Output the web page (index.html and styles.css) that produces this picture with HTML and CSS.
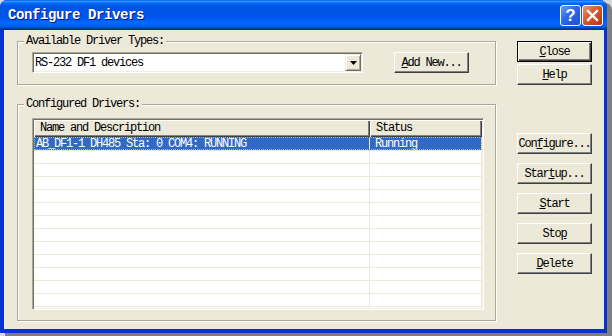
FILE: index.html
```html
<!DOCTYPE html>
<html>
	<head>
		<meta charset="UTF-8">
		<title>Configure Drivers</title>
		<link rel="stylesheet" href="styles.css">
	</head>
	<body>
		<div class="window">
			<div class="titlebar">
				<span class="title">Configure Drivers</span>
				<span class="tbtn help">?</span>
				<span class="tbtn shut">
					<svg width="13" height="13" viewBox="0 0 13 13">
						<path d="M2 2 L11 11 M11 2 L2 11" stroke="#fff" stroke-width="2.4" stroke-linecap="square" />
					</svg>
				</span>
			</div>
			<div class="client">
				<div class="left">
					<div class="group types">
						<div class="caption">Available Driver Types:</div>
						<div class="typerow">
							<div class="combo">
								<span class="combo-text">RS-232 DF1 devices</span>
								<span class="drop">
									<svg width="7" height="4" viewBox="0 0 7 4">
										<path d="M0 0 H7 L3.5 4 Z" fill="#000" />
									</svg>
								</span>
							</div>
							<button class="btn add"><u>A</u>dd New...</button>
						</div>
					</div>
					<div class="group drivers">
						<div class="caption">Configured Drivers:</div>
						<div class="list">
							<div class="head">
								<div class="hcell name">Name and Description</div>
								<div class="hcell status">Status</div>
							</div>
							<div class="row selected">
								<div class="cell name">AB_DF1-1 DH485 Sta: 0 COM4: RUNNING</div>
								<div class="cell status">Running</div>
							</div>
							<div class="row"><div class="cell name"></div><div class="cell status"></div></div>
							<div class="row"><div class="cell name"></div><div class="cell status"></div></div>
							<div class="row"><div class="cell name"></div><div class="cell status"></div></div>
							<div class="row"><div class="cell name"></div><div class="cell status"></div></div>
							<div class="row"><div class="cell name"></div><div class="cell status"></div></div>
							<div class="row"><div class="cell name"></div><div class="cell status"></div></div>
							<div class="row"><div class="cell name"></div><div class="cell status"></div></div>
							<div class="row"><div class="cell name"></div><div class="cell status"></div></div>
							<div class="row"><div class="cell name"></div><div class="cell status"></div></div>
							<div class="row"><div class="cell name"></div><div class="cell status"></div></div>
							<div class="row"><div class="cell name"></div><div class="cell status"></div></div>
							<div class="row"><div class="cell name"></div><div class="cell status"></div></div>
							<div class="row"><div class="cell name"></div><div class="cell status"></div></div>
						</div>
					</div>
				</div>
				<div class="right">
					<button class="btn default"><u>C</u>lose</button>
					<button class="btn help-btn"><u>H</u>elp</button>
					<button class="btn configure">Con<u>f</u>igure...</button>
					<button class="btn">Star<u>t</u>up...</button>
					<button class="btn"><u>S</u>tart</button>
					<button class="btn">Sto<u>p</u></button>
					<button class="btn"><u>D</u>elete</button>
				</div>
			</div>
		</div>
	</body>
</html>
```

FILE: styles.css
```css
* {
	margin: 0;
	padding: 0;
	box-sizing: border-box;
}

body {
	width: 612px;
	height: 336px;
	background: #d8d8d8;
	font-family: "Liberation Mono", "Noto Sans CJK SC", monospace;
	font-size: 12px;
	letter-spacing: -1.2px;
	color: #000;
	overflow: hidden;
}

.window {
	width: 607px;
	height: 333px;
	display: flex;
	flex-direction: column;
	background: #0831d9;
	border-radius: 7px 7px 0 0;
	box-shadow: 5px 3px 0 #7f7f7f;
	overflow: hidden;
}

/* title bar */
.titlebar {
	height: 30px;
	display: flex;
	align-items: flex-start;
	padding: 5px 4px 0 8px;
	background: linear-gradient(to bottom, #0058ee 0%, #3593ff 4%, #288eff 6%, #127dff 8%, #036ffc 10%, #0262ee 14%, #0057e5 20%, #0054e3 24%, #0055eb 56%, #005bf5 66%, #026afe 76%, #0062ef 86%, #0052d6 92%, #0040ab 94%, #003092 100%);
}

.title {
	flex: 1;
	color: #fff;
	font-weight: bold;
	font-size: 14px;
	letter-spacing: -0.4px;
	line-height: 20px;
	text-shadow: 1px 1px #0a1883;
}

.tbtn {
	width: 21px;
	height: 21px;
	border: 1px solid #fff;
	border-radius: 3px;
	display: flex;
	align-items: center;
	justify-content: center;
	color: #fff;
}

.help {
	margin-right: 1px;
	background: linear-gradient(135deg, #6f9cf7 0%, #2d66e6 45%, #1f4fd0 100%);
	font-family: "Liberation Sans", sans-serif;
	font-weight: bold;
	font-size: 17px;
	letter-spacing: 0;
}

.shut {
	background: linear-gradient(135deg, #ec9479 0%, #d9572f 45%, #b7350f 100%);
}

/* client area */
.client {
	flex: 1;
	margin: 0 3px 4px 4px;
	background: #ece9d8;
	display: flex;
	padding: 11px 12px 0 13px;
}

.left {
	width: 479px;
}

.group {
	border: 1px solid #aca899;
	box-shadow: inset 1px 1px #fff, 1px 1px #fff;
	padding: 0 0 0 14px;
}

.caption {
	width: fit-content;
	margin: -7px 0 0 -8px;
	padding: 0 2px;
	line-height: 12px;
	background: #ece9d8;
}

.types {
	padding-bottom: 11px;
}

.typerow {
	display: flex;
	margin-top: 5px;
	gap: 31px;
}

.combo {
	width: 331px;
	height: 21px;
	display: flex;
	align-items: center;
	background: #fff;
	border: 1px solid;
	border-color: #aca899 #fff #fff #aca899;
	box-shadow: inset 1px 1px #716f64, inset -1px -1px #f1efe2;
	padding: 1px;
}

.combo-text {
	flex: 1;
	padding-left: 1px;
}

.drop {
	width: 16px;
	height: 17px;
	display: flex;
	align-items: center;
	justify-content: center;
	background: #ece9d8;
	border: 1px solid;
	border-color: #f1efe2 #716f64 #716f64 #f1efe2;
	box-shadow: inset 1px 1px #fff, inset -1px -1px #aca899;
}

.btn {
	width: 75px;
	height: 21px;
	font: inherit;
	letter-spacing: inherit;
	color: #000;
	background: #ece9d8;
	border: 1px solid;
	border-color: #fff #404040 #404040 #fff;
	box-shadow: inset -1px -1px #808080;
	white-space: nowrap;
}

.btn u {
	text-underline-offset: 1px;
}

.drivers {
	margin-top: 19px;
	padding-bottom: 10px;
}

.list {
	margin-top: 8px;
	width: 452px;
	height: 192px;
	background: #fff;
	border: 1px solid;
	border-color: #aca899 #fff #fff #aca899;
	box-shadow: inset 1px 1px #716f64, inset -1px -1px #f1efe2;
	padding: 1px;
	overflow: hidden;
}

.head {
	display: flex;
	height: 17px;
}

.hcell {
	background: #ece9d8;
	line-height: 16px;
	padding-left: 6px;
	box-shadow: inset 1px 1px #fff, inset -1px -1px #404040, inset -2px -2px #808080;
}

.name {
	width: 336px;
	flex: none;
}

.status {
	flex: 1;
}

.row {
	display: flex;
	height: 13px;
	border-top: 1px solid #ece9d8;
	line-height: 12px;
}

.cell {
	border-right: 1px solid #ece9d8;
	white-space: nowrap;
}

.cell.name {
	padding-left: 2px;
}

.cell.status {
	padding-left: 5px;
}

.row.selected {
	background: #316ac5;
	color: #fff;
	border-top-color: #316ac5;
	outline: 1px dotted #9db5e0;
	outline-offset: -1px;
}

/* right buttons */
.right {
	margin-left: 21px;
	width: 75px;
	display: flex;
	flex-direction: column;
	gap: 9px;
}

.right .default {
	border: 1px solid #000;
	box-shadow: inset 1px 1px #fff, inset -1px -1px #404040, inset -2px -2px #808080;
}

.right .help-btn {
	margin-top: -7px;
}

.right .configure {
	margin-top: 39px;
}
```
